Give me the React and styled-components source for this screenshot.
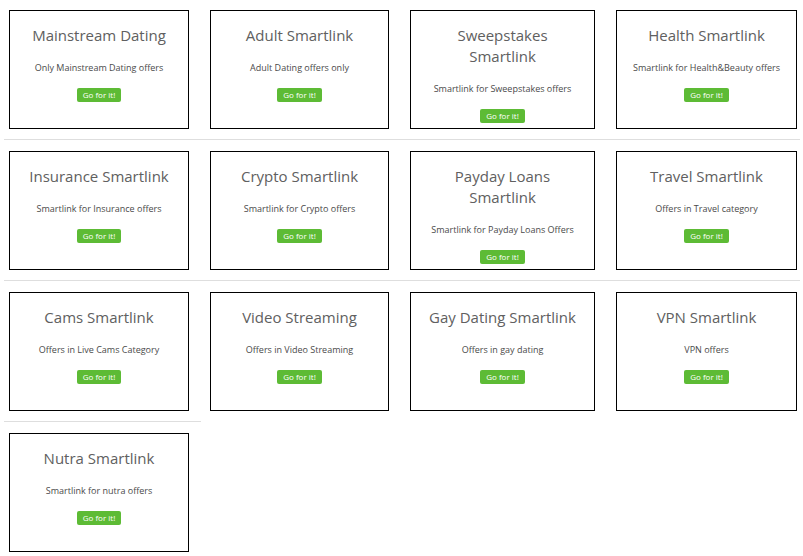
import React from 'react';
import styled, { createGlobalStyle } from 'styled-components';

const GlobalStyle = createGlobalStyle`
  html, body {
    margin: 0;
    padding: 0;
    background: #fff;
  }
  body {
    font-family: "Open Sans", "Liberation Sans", Arial, sans-serif;
  }
`;

const Grid = styled.div`
  display: grid;
  grid-template-columns: 197px 200px 206px 193px;
  margin-left: 4px;
  width: 796px;
`;

const Cell = styled.div`
  padding: ${p => (p.$first ? '10px' : '11px')} 12px 10px 9px;
  border-top: ${p => (p.$first ? 'none' : '1px solid #dedede')};

  &:nth-child(4n + 1) {
    padding-left: 5px;
  }

  &:nth-child(4n) {
    padding-right: 3px;
  }
`;

const Card = styled.div`
  box-sizing: border-box;
  height: 119px;
  border: 1px solid #000;
  padding: 14px 8px 0;
  text-align: center;
`;

const Title = styled.div`
  font-size: 15px;
  line-height: 21px;
  color: #606060;
  margin: 0 auto;
  max-width: ${p => p.$wrap || 'none'};
`;

const Desc = styled.div`
  font-size: 9px;
  line-height: 14px;
  color: #4a4a4a;
  margin-top: 15px;
`;

const GoButton = styled.button`
  display: inline-block;
  margin-top: 13px;
  height: 14px;
  padding: 0 6px;
  border: none;
  border-radius: 2px;
  background: #5dbb35;
  color: #fff;
  font-family: inherit;
  font-size: 8px;
  line-height: 14px;
  cursor: pointer;
`;

const offers = [
  { title: 'Mainstream Dating', desc: 'Only Mainstream Dating offers' },
  { title: 'Adult Smartlink', desc: 'Adult Dating offers only' },
  { title: 'Sweepstakes Smartlink', desc: 'Smartlink for Sweepstakes offers', wrap: '100px' },
  { title: 'Health Smartlink', desc: 'Smartlink for Health&Beauty offers' },
  { title: 'Insurance Smartlink', desc: 'Smartlink for Insurance offers' },
  { title: 'Crypto Smartlink', desc: 'Smartlink for Crypto offers' },
  { title: 'Payday Loans Smartlink', desc: 'Smartlink for Payday Loans Offers', wrap: '100px' },
  { title: 'Travel Smartlink', desc: 'Offers in Travel category' },
  { title: 'Cams Smartlink', desc: 'Offers in Live Cams Category' },
  { title: 'Video Streaming', desc: 'Offers in Video Streaming' },
  { title: 'Gay Dating Smartlink', desc: 'Offers in gay dating' },
  { title: 'VPN Smartlink', desc: 'VPN offers' },
  { title: 'Nutra Smartlink', desc: 'Smartlink for nutra offers' },
];

export default function App() {
  return (
    <>
      <GlobalStyle />
      <Grid>
        {offers.map((o, i) => (
          <Cell key={o.title} $first={i < 4}>
            <Card>
              <Title $wrap={o.wrap}>{o.title}</Title>
              <Desc>{o.desc}</Desc>
              <GoButton>Go for it!</GoButton>
            </Card>
          </Cell>
        ))}
      </Grid>
    </>
  );
}
